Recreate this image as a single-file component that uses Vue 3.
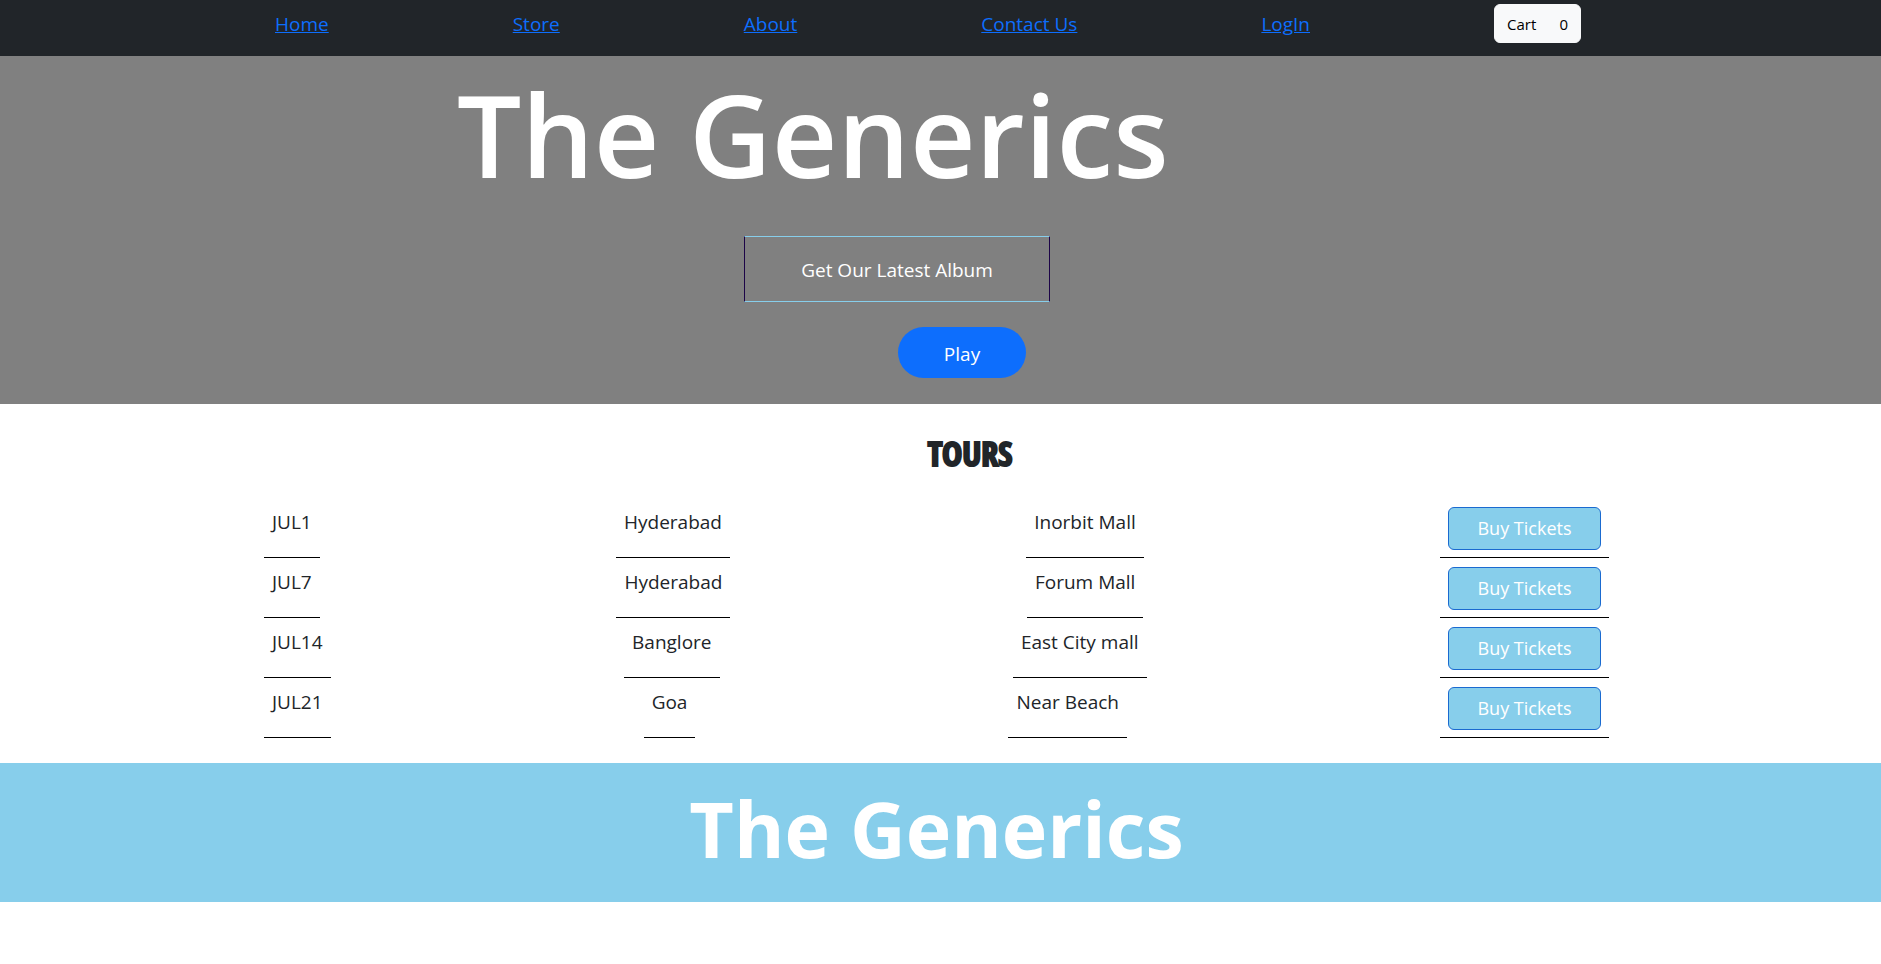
<script setup>
const links = ['Home', 'Store', 'About', 'Contact Us', 'LogIn']
const tours = [
  { date: 'JUL1', city: 'Hyderabad', venue: 'Inorbit Mall' },
  { date: 'JUL7', city: 'Hyderabad', venue: 'Forum Mall' },
  { date: 'JUL14', city: 'Banglore', venue: 'East City mall' },
  { date: 'JUL21', city: 'Goa', venue: 'Near Beach' },
]
</script>

<template>
  <div class="page">
    <nav class="navbar">
      <a v-for="link in links" :key="link" href="#">{{ link }}</a>
      <button type="button" class="cart"><span>Cart</span><span>0</span></button>
    </nav>
    <header class="hero">
      <h1>The Generics</h1>
      <button type="button" class="album">Get Our Latest Album</button>
      <button type="button" class="play">Play</button>
    </header>
    <main class="tours">
      <h2>TOURS</h2>
      <table>
        <tbody>
          <tr v-for="tour in tours" :key="tour.date">
            <td>{{ tour.date }}</td>
            <td>{{ tour.city }}</td>
            <td>{{ tour.venue }}</td>
            <td><button type="button" class="buy">Buy Tickets</button></td>
          </tr>
        </tbody>
      </table>
    </main>
    <footer class="footer">
      <p>The Generics</p>
    </footer>
  </div>
</template>

<style>
body {
  margin: 0;
  background: #fff;
}
</style>

<style scoped>
.page {
  font-family: "Segoe UI", "Open Sans", "Noto Sans", sans-serif;
  font-size: 19px;
  line-height: 30px;
  color: #212529;
}
button {
  font: inherit;
  box-sizing: border-box;
  cursor: pointer;
}
.navbar {
  display: flex;
  justify-content: space-between;
  align-items: flex-start;
  box-sizing: border-box;
  height: 56px;
  padding: 4px 300px 0 275px;
  background: #212529;
}
.navbar a {
  padding-top: 5px;
  color: #0d6efd;
  text-decoration: underline;
}
.cart {
  display: flex;
  justify-content: space-between;
  width: 87px;
  padding: 7px 12px 6px;
  border: 1px solid #f8f9fa;
  border-radius: 6px;
  background: #f8f9fa;
  color: #000;
  font-size: 15px;
  line-height: 24px;
}
.hero {
  display: flex;
  flex-direction: column;
  align-items: flex-start;
  padding-bottom: 26px;
  background: gray;
  color: #fff;
}
h1 {
  margin: 0 0 0 457px;
  padding: 6px 0 30px;
  font-size: 114px;
  font-weight: 600;
  line-height: 144px;
}
.album {
  width: 306px;
  margin-left: 744px;
  padding: 18px 0 16px;
  border: 1px solid;
  border-color: skyblue #1c0447;
  background: transparent;
  color: #fff;
}
.play {
  width: 128px;
  margin: 25px 0 0 898px;
  padding: 12px 0 9px;
  border: 0;
  border-radius: 26px;
  background: #0d6efd;
  color: #fff;
}
.tours {
  padding: 29px 272px 25px 264px;
}
h2 {
  margin: 0 0 25px 67px;
  font-family: Impact, "Open Sans Condensed", "Roboto Condensed", "DejaVu Sans Condensed", sans-serif;
  font-size: 34px;
  font-weight: 800;
  line-height: 40px;
  text-align: center;
  -webkit-text-stroke: 2px #212529;
}
table,
tbody {
  display: block;
}
tr {
  display: flex;
  justify-content: space-between;
}
td {
  padding: 9px 8px 7px;
  border-bottom: 1px solid #000;
}
.buy {
  display: block;
  width: 153px;
  padding: 5px 0 6px;
  border: 1px solid #1a6ad0;
  border-radius: 6px;
  background: skyblue;
  color: #fff;
  font-size: 18px;
}
.footer {
  padding: 6px 8px 13px 0;
  background: skyblue;
  color: #fff;
}
.footer p {
  margin: 0;
  font-size: 77px;
  font-weight: 700;
  line-height: 120px;
  text-align: center;
}
</style>
